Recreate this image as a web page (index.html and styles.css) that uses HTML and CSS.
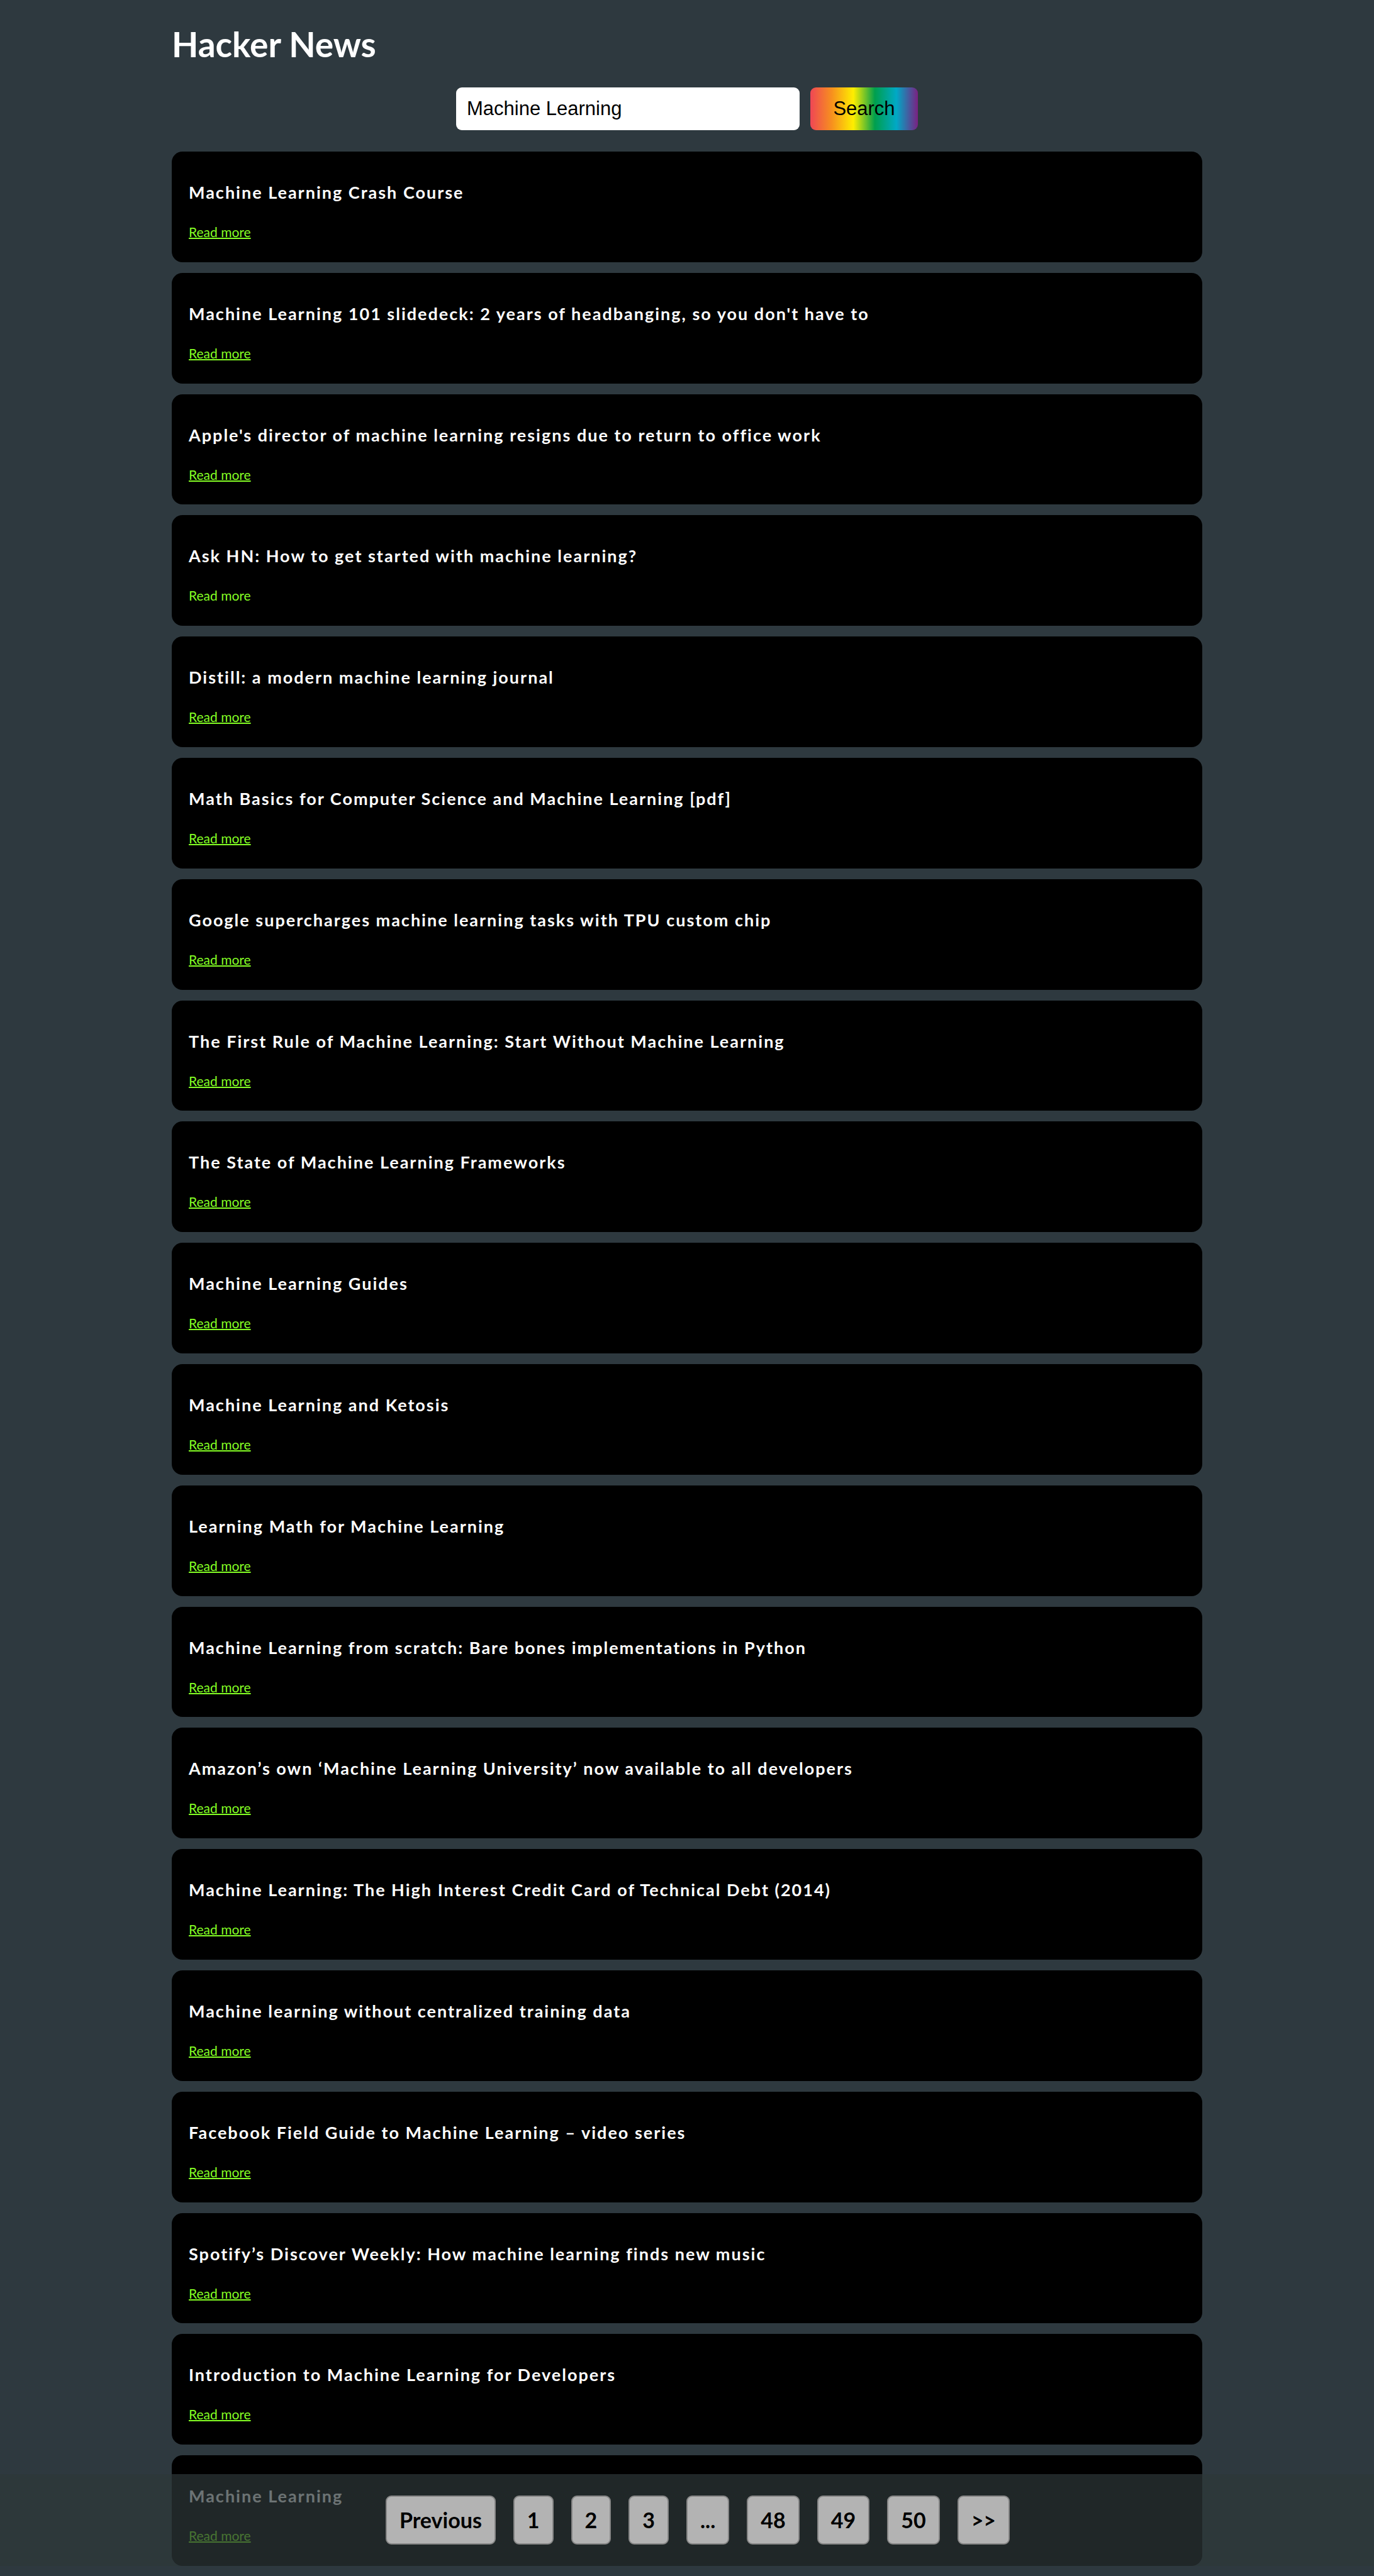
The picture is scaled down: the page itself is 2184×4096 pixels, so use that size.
FILE: index.html
```html
<!DOCTYPE html>
<html lang="en">
<head>
<meta charset="utf-8">
<meta name="viewport" content="width=device-width, initial-scale=1">
<title>Hacker News</title>
<link rel="stylesheet" href="styles.css">
</head>
<body>
<main class="page">
  <h1 class="page-title">Hacker News</h1>
  <form class="search">
    <input class="search-input" type="text" value="Machine Learning" aria-label="Search stories">
    <button class="search-button" type="submit">Search</button>
  </form>
  <section class="stories">
    <article class="story"><h2 class="story-title">Machine Learning Crash Course</h2><a class="story-link" href="#">Read more</a></article>
    <article class="story"><h2 class="story-title">Machine Learning 101 slidedeck: 2 years of headbanging, so you don't have to</h2><a class="story-link" href="#">Read more</a></article>
    <article class="story"><h2 class="story-title">Apple's director of machine learning resigns due to return to office work</h2><a class="story-link" href="#">Read more</a></article>
    <article class="story"><h2 class="story-title">Ask HN: How to get started with machine learning?</h2><a class="story-link story-link-plain" href="#">Read more</a></article>
    <article class="story"><h2 class="story-title">Distill: a modern machine learning journal</h2><a class="story-link" href="#">Read more</a></article>
    <article class="story"><h2 class="story-title">Math Basics for Computer Science and Machine Learning [pdf]</h2><a class="story-link" href="#">Read more</a></article>
    <article class="story"><h2 class="story-title">Google supercharges machine learning tasks with TPU custom chip</h2><a class="story-link" href="#">Read more</a></article>
    <article class="story"><h2 class="story-title">The First Rule of Machine Learning: Start Without Machine Learning</h2><a class="story-link" href="#">Read more</a></article>
    <article class="story"><h2 class="story-title">The State of Machine Learning Frameworks</h2><a class="story-link" href="#">Read more</a></article>
    <article class="story"><h2 class="story-title">Machine Learning Guides</h2><a class="story-link" href="#">Read more</a></article>
    <article class="story"><h2 class="story-title">Machine Learning and Ketosis</h2><a class="story-link" href="#">Read more</a></article>
    <article class="story"><h2 class="story-title">Learning Math for Machine Learning</h2><a class="story-link" href="#">Read more</a></article>
    <article class="story"><h2 class="story-title">Machine Learning from scratch: Bare bones implementations in Python</h2><a class="story-link" href="#">Read more</a></article>
    <article class="story"><h2 class="story-title">Amazon’s own ‘Machine Learning University’ now available to all developers</h2><a class="story-link" href="#">Read more</a></article>
    <article class="story"><h2 class="story-title">Machine Learning: The High Interest Credit Card of Technical Debt (2014)</h2><a class="story-link" href="#">Read more</a></article>
    <article class="story"><h2 class="story-title">Machine learning without centralized training data</h2><a class="story-link" href="#">Read more</a></article>
    <article class="story"><h2 class="story-title">Facebook Field Guide to Machine Learning – video series</h2><a class="story-link" href="#">Read more</a></article>
    <article class="story"><h2 class="story-title">Spotify’s Discover Weekly: How machine learning finds new music</h2><a class="story-link" href="#">Read more</a></article>
    <article class="story"><h2 class="story-title">Introduction to Machine Learning for Developers</h2><a class="story-link" href="#">Read more</a></article>
    <article class="story"><h2 class="story-title">Machine Learning</h2><a class="story-link" href="#">Read more</a></article>
  </section>
</main>
<nav class="pagination" aria-label="Pages">
  <button class="page-button" type="button">Previous</button>
  <button class="page-button" type="button">1</button>
  <button class="page-button" type="button">2</button>
  <button class="page-button" type="button">3</button>
  <button class="page-button" type="button">...</button>
  <button class="page-button" type="button">48</button>
  <button class="page-button" type="button">49</button>
  <button class="page-button" type="button">50</button>
  <button class="page-button" type="button">&gt;&gt;</button>
</nav>
</body>
</html>
```
FILE: styles.css
```css
* {
  box-sizing: border-box;
}

body {
  margin: 0;
  background: #2e393f;
  font-family: Lato, sans-serif;
  color: #fff;
}

.page {
  display: flex;
  flex-direction: column;
  width: 75%;
  min-height: 100vh;
  margin: 0 auto;
  padding: 37px 0 16px;
}

.page-title {
  margin: 0 0 36px;
  font-size: 55px;
  line-height: 66px;
  font-weight: 700;
}

.search {
  display: flex;
  justify-content: center;
  gap: 17px;
  margin-bottom: 34px;
}

.search-input,
.search-button {
  height: 68px;
  border: 0;
  border-radius: 9px;
  font: 31px "Liberation Sans", Arial, sans-serif;
  color: #000;
}

.search-input {
  width: 546px;
  padding: 0 17px;
  background: #fff;
}

.search-button {
  width: 171px;
  padding: 0;
  background: linear-gradient(90deg, #ef4655, #f7901e 20%, #feee00 40%, #009f4d 60%, #00a9c6 80%, #7a2182);
}

/* All cards share the leftover height equally */
.stories {
  flex: 1;
  display: grid;
  grid-auto-rows: 1fr;
  gap: 17px;
}

.story {
  display: flex;
  flex-direction: column;
  align-items: flex-start;
  padding: 48px 27px 0;
  border-radius: 17px;
  background: #000;
}

.story-title {
  margin: 0 0 34px;
  font-size: 27px;
  line-height: 33px;
  font-weight: 700;
  letter-spacing: 2px;
}

.story-link {
  font-size: 21px;
  line-height: 25px;
  color: #84ff24;
  text-decoration-thickness: 2px;
}

.story-link-plain {
  text-decoration: none;
}

.pagination {
  position: fixed;
  right: 0;
  bottom: 16px;
  left: 0;
  display: flex;
  justify-content: center;
  gap: 28px;
  padding: 34px 0 34px 34px;
  background: #2e3839;
  opacity: 0.7;
}

.page-button {
  padding: 17px 20px;
  border: 2px solid #bebebe;
  border-radius: 9px;
  background: #fff;
  font: 700 34px/40px Lato, sans-serif;
  color: #000;
}
```
